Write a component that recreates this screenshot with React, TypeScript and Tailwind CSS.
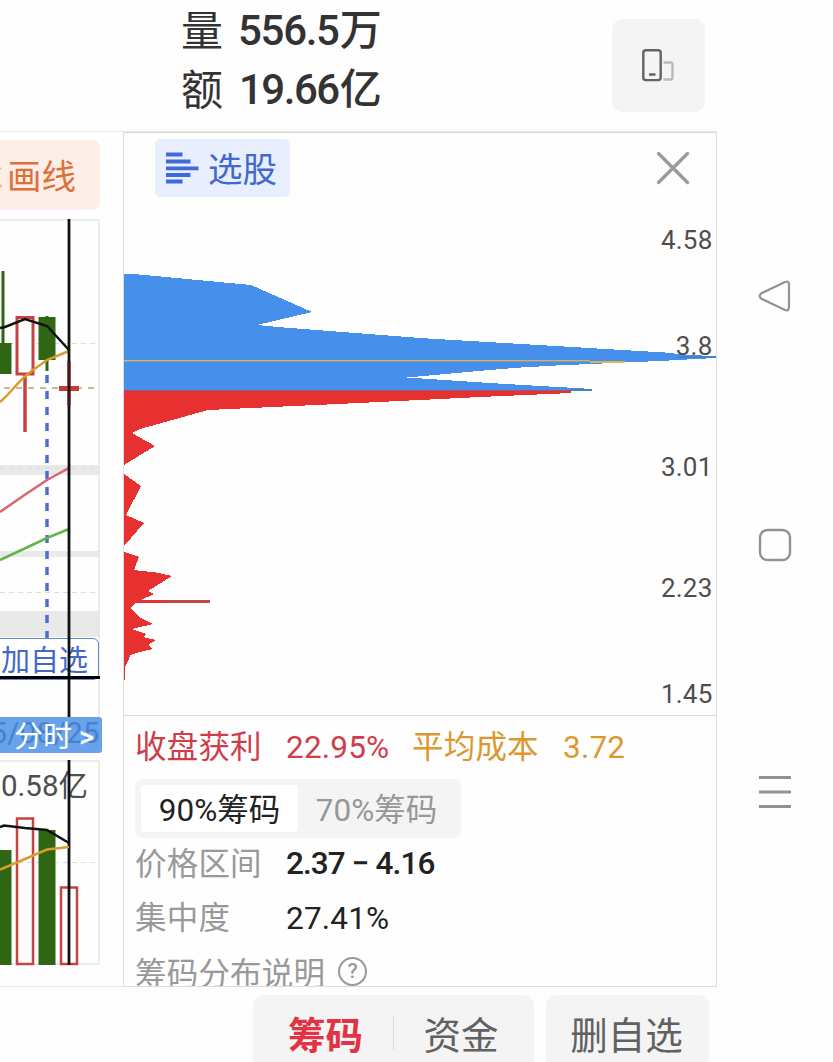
import React from "react";

const priceLabels = [
  { text: "4.58", pad: "pt-0" },
  { text: "3.8", pad: "pt-[74px]" },
  { text: "3.01", pad: "pt-[89px]" },
  { text: "2.23", pad: "pt-[89px]" },
  { text: "1.45", pad: "pt-[74px]" },
];

function RotateIcon() {
  return (
    <svg className="relative left-[-1px] top-[-1px]" width="34" height="34" viewBox="0 0 34 34" fill="none">
      <rect x="2.300" y="2.300" width="17.400" height="29.800" rx="2.500" stroke="#636363" strokeWidth="2.400" />
      <path d="M8 26.500h6.500" stroke="#636363" strokeWidth="2.500" />
      <path d="M22.500 14.500h7a2 2 0 0 1 2 2v13a2 2 0 0 1-2 2h-7" stroke="#b9b9b9" strokeWidth="2.400" />
    </svg>
  );
}

function Header() {
  return (
    <header className="flex h-[131px] items-start pl-[181px] pt-[2px]">
      <div className="w-[431px] text-[42px] leading-[58px] text-[#333]">
        <div className="flex">
          <span className="w-[57px] pt-px">量</span>
          <span className="font-medium tracking-[-1.300px]">
            556.5<span className="ml-px">万</span>
          </span>
        </div>
        <div className="flex">
          <span className="w-[58px] pt-px">额</span>
          <span className="font-medium tracking-[-1.500px]">
            19.66<span className="ml-px">亿</span>
          </span>
        </div>
      </div>
      <button className="mt-[17px] flex h-[93px] w-[93px] items-center justify-center rounded-[11px] bg-[#f4f4f4]">
        <RotateIcon />
      </button>
    </header>
  );
}

function CandleChart() {
  return (
    <div className="relative mt-[9px] h-[767px] w-[123px]">
      <svg className="block" width="123" height="767" viewBox="0 219 123 767" fill="none">
        <rect x="0" y="465" width="100" height="10" fill="#e9e9e9" />
        <rect x="0" y="551" width="100" height="6" fill="#e9e9e9" />
        <rect x="0" y="611" width="100" height="26" fill="#e9e9e9" />
        <path d="M0 220H99V717M0 761H99V964H0" stroke="#e6e6e6" strokeWidth="1.500" />
        <path d="M0 343.500H97M0 468H97M0 592.500H97M0 862.500H97" stroke="#dcdcdc" strokeDasharray="5 4" />
        <path d="M4 388H97" stroke="#bba573" strokeWidth="1.500" strokeDasharray="6 6" />
        <path d="M47 375V640" stroke="#4a6fd2" strokeWidth="3.500" strokeDasharray="8 8" />
        <path d="M3 271V350M47 316V371" stroke="#2f6614" strokeWidth="3" />
        <rect x="0" y="343" width="11.500" height="31" fill="#2f6614" />
        <rect x="17" y="317.500" width="16" height="56.500" fill="#fff" stroke="#c44343" strokeWidth="3" />
        <path d="M25 374V432" stroke="#c44343" strokeWidth="3.500" />
        <rect x="38.500" y="317" width="17" height="43" fill="#2f6614" />
        <path d="M0 512L26 494L47 480L69 468" stroke="#db6470" strokeWidth="2.500" />
        <path d="M0 560L30 546L47 538L69 529" stroke="#65b34c" strokeWidth="2.500" />
        <path d="M0 402Q6 397 12 390Q22 378 33 370L47 360L69 351" stroke="#d99c2e" strokeWidth="2.500" />
        <path d="M0 328L5 327L25 319L47 326L69 350" stroke="#111" strokeWidth="2.500" />
        <rect x="59" y="386" width="20" height="5" fill="#c83a3a" />
        <rect x="0" y="850" width="11.500" height="115" fill="#2f6614" />
        <rect x="17" y="818.500" width="16" height="145.500" stroke="#c44343" strokeWidth="2.500" />
        <rect x="38.500" y="830" width="17" height="135" fill="#2f6614" />
        <rect x="61" y="887.500" width="16" height="76.500" stroke="#c44343" strokeWidth="2.500" />
      </svg>
      <button className="absolute left-[-10px] top-[419px] h-[42px] w-[109px] rounded-[6px] border-[1.5px] border-[#6787d5] bg-white pl-[10px] text-left text-[29px] leading-[44px] text-[#4467c9]">
        加自选
      </button>
      <span className="absolute right-[35px] top-[548px] text-[29.5px] leading-[38px] text-[#4e4e4e]">0.58亿</span>
      <svg className="absolute left-0 top-0" width="123" height="767" viewBox="0 219 123 767" fill="none">
        <path d="M69 219V717M69 760V965" stroke="#111" strokeWidth="2.800" />
        <path d="M69 361V386M69 391V405" stroke="#4e1313" strokeWidth="3" />
        <path d="M0 677.500H100" stroke="#000" strokeWidth="3" />
        <path d="M0 827L4 825.500L25 828L47 830L69 843" stroke="#111" strokeWidth="2.500" />
        <path d="M0 869.500L25 859L47 849.500L69 847" stroke="#d99c2e" strokeWidth="2.500" />
      </svg>
      <div className="absolute left-0 top-[498px] h-[36px] w-[102px] overflow-hidden rounded-r-[3px] bg-[#68a2eb] leading-[36px]">
        <span className="absolute right-[2px] top-[-2px] text-[29px] tracking-[0.6px] text-[#4681cd]">5/08/25</span>
        <span className="absolute left-[14px] top-[2px] whitespace-nowrap text-[29px] text-white">
          分时<span className="ml-[7px] font-medium">&gt;</span>
        </span>
      </div>
    </div>
  );
}

function DistributionChart() {
  return (
    <svg className="block" width="592" height="517" viewBox="124 198 592 517" shapeRendering="crispEdges">
      <path
        fill="#4690ec"
        d="M124 274H134L251 285L312 312L257 325L278 327L420 338L665 352.500L687 355L716 356V358L687 359.500L660 361L590 364L556 365.500L521 367.500L490 370L407 377.500L489 383L558 387L592 389V391H124Z"
      />
      <path
        fill="#e73030"
        d="M124 391H571V393L480 397L359 403L208 410L140 429L132 433L155 446L124 465ZM124 474L141 486L126 515L144 523L124 546ZM124 552L139 557L134 570L156 572.500L172 576L148 591L154 594L141 600H210V603H135L131 608L139 617L153 624L132 629L146 634L143 637L156 640L148 645L153 649L140 652L130 655L129 659L125 667V680H124Z"
      />
      <path d="M124 390.500H571" stroke="#9b5878" strokeWidth="1" />
      <path d="M571 390H592" stroke="#4b80b8" strokeWidth="2" />
      <path d="M678 357H716" stroke="#3f84d0" strokeWidth="2" />
      <path d="M164 601.500H210" stroke="#c04545" strokeWidth="3" />
      <path d="M124 361H590" stroke="#8b9d87" strokeWidth="2" />
      <path d="M124 360.500H590" stroke="#cbb574" strokeWidth="1" />
      <path d="M590 362H625" stroke="#dfb44e" strokeWidth="2" />
    </svg>
  );
}

function ChipPanel() {
  return (
    <section className="flex h-[855px] w-[594px] flex-col overflow-hidden border border-[#dcdcdc]">
      <div className="flex h-[65px] shrink-0 items-start justify-between pl-[31px] pr-[26px] pt-[6px]">
        <button className="flex h-[58px] w-[135px] items-center rounded-[5px] bg-[#e8eefe] pl-[11px] text-[34.5px] text-[#4268cd]">
          <svg className="mr-[9px]" width="33" height="33" viewBox="0 0 33 33" stroke="#4069d9" strokeWidth="3.800">
            <path d="M0 2.500H16.500M0 9.500H24.500M0 16.300H32.500M0 23H24.500M0 29.500H16.500" />
          </svg>
          <span className="pt-[4px] leading-[58px]">选股</span>
        </button>
        <svg className="mt-[12px]" width="34" height="34" viewBox="0 0 34 34" stroke="#9b9b9b" strokeWidth="3.300" strokeLinecap="round">
          <path d="M2.500 2.500L31.500 31.500M31.500 2.500L2.500 31.500" />
        </svg>
      </div>
      <div className="relative h-[517px] shrink-0">
        <DistributionChart />
        <div className="absolute right-[3.500px] top-[26px] flex flex-col items-end text-[26px] leading-[32px] tracking-[0.2px] text-[#4e4e4e]">
          {priceLabels.map((label) => (
            <span key={label.text} className={label.pad}>
              {label.text}
            </span>
          ))}
        </div>
      </div>
      <div className="shrink-0 border-t border-[#dcdcdc] pl-[11px] text-[31.5px]">
        <div className="flex h-[63px] items-center leading-[63px]">
          <span className="w-[151px] tracking-[0.2px] text-[#cf3d4b]">收盘获利</span>
          <span className="w-[126px] tracking-[0.2px] text-[#cf3d4b]">22.95%</span>
          <span className="w-[150px] tracking-[0.2px] text-[#dc9830]">平均成本</span>
          <span className="pl-px tracking-[0.2px] text-[#dc9830]">3.72</span>
        </div>
        <div className="flex h-[59px] w-[326px] rounded-[8px] bg-[#f4f4f4] p-[6px] text-[31.5px] leading-[51px]">
          <button className="h-[47px] w-[157px] rounded-[4px] bg-white text-[#222]">90%筹码</button>
          <button className="h-[47px] w-[157px] text-[#979797]">70%筹码</button>
        </div>
        <div className="flex h-[52px] leading-[52px]">
          <span className="w-[151px] pt-px tracking-[0.2px] text-[#999]">价格区间</span>
          <span className="font-medium tracking-[-0.9px] text-[#222]">2.37 − 4.16</span>
        </div>
        <div className="flex h-[56px] leading-[58px]">
          <span className="w-[151px] tracking-[0.2px] text-[#999]">集中度</span>
          <span className="tracking-[0.2px] text-[#222]">27.41%</span>
        </div>
        <div className="flex h-[50px] items-start leading-[58px] text-[#999]">
          <span className="w-[203px] tracking-[0.2px]">筹码分布说明</span>
          <span className="mt-[11px] flex h-[29px] w-[29px] items-center justify-center rounded-full border-2 border-[#999] text-[21px] font-medium leading-[25px]">
            ?
          </span>
        </div>
      </div>
    </section>
  );
}

function BottomBar() {
  return (
    <footer className="flex h-[75px] gap-[12px] pl-[253px] pt-[8px] text-[37.5px] leading-[82px] text-[#616161]">
      <div className="flex h-[80px] w-[281px] items-start rounded-[11px] bg-[#f4f4f4]">
        <button className="w-[140px] pl-[5px] font-bold text-[#e23345]">筹码</button>
        <span className="mt-[20px] h-[35px] w-px bg-[#ddd]" />
        <button className="w-[140px] pr-[6px]">资金</button>
      </div>
      <button className="h-[80px] w-[163px] rounded-[11px] bg-[#f4f4f4] pr-[2px]">删自选</button>
    </footer>
  );
}

function SystemNav() {
  return (
    <nav className="flex w-[116px] flex-col items-center pt-[279px]">
      <svg width="34" height="34" viewBox="0 0 34 34" fill="none" stroke="#929292" strokeWidth="2.200">
        <path d="M3 14.500L27 3Q31 1.500 31 5.500V28Q31 32.500 27 31L3 19.500Q0.500 17 3 14.500Z" />
      </svg>
      <svg className="mt-[215px]" width="34" height="34" viewBox="0 0 34 34" fill="none" stroke="#929292" strokeWidth="2.400">
        <rect x="2" y="2" width="30" height="30" rx="7.500" />
      </svg>
      <svg className="mt-[213px]" width="34" height="34" viewBox="0 0 34 34" stroke="#929292" strokeWidth="2.800">
        <path d="M1 2.500H33M1 17H33M1 31.500H33" />
      </svg>
    </nav>
  );
}

export default function App() {
  return (
    <div className="flex h-[1062px] w-[833px] overflow-hidden bg-[#fefefe] font-['Roboto','Noto_Sans_CJK_SC',sans-serif]">
      <div className="flex w-[717px] flex-col">
        <Header />
        <main className="flex h-[856px] border-b border-t border-[#e8e8e8]">
          <aside className="w-[123px] shrink-0 overflow-hidden pt-[8px]">
            <button className="flex h-[70px] w-[100px] items-center rounded-r-[8px] bg-[#feeee8] text-[34.5px] text-[#de7039]">
              <svg className="mr-[5px]" width="2" height="34" viewBox="0 0 2 34" stroke="#f3b08e" strokeWidth="2">
                <path d="M0 10L1 11M0 29L2 27" />
              </svg>
              <span className="pt-[3px] leading-[70px]">画线</span>
            </button>
            <CandleChart />
          </aside>
          <ChipPanel />
        </main>
        <BottomBar />
      </div>
      <SystemNav />
    </div>
  );
}
